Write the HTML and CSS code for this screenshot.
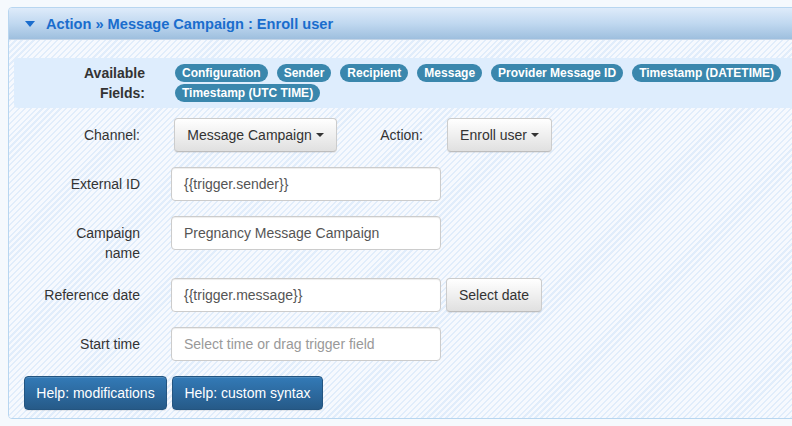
FILE: index.html
```html
<!DOCTYPE html>
<html>
<head>
<meta charset="utf-8">
<link rel="stylesheet" href="styles.css">
</head>
<body>
<div class="panel">
  <div class="panel-head">
    <span class="head-caret"></span>
    <span class="head-title">Action » Message Campaign : Enroll user</span>
  </div>
  <div class="panel-body">
    <div class="fields-box">
      <div class="fields-label">Available<br>Fields:</div>
      <div class="badges">
        <span class="badge">Configuration</span>
        <span class="badge">Sender</span>
        <span class="badge">Recipient</span>
        <span class="badge">Message</span>
        <span class="badge">Provider Message ID</span>
        <span class="badge">Timestamp (DATETIME)</span>
        <span class="badge">Timestamp (UTC TIME)</span>
      </div>
    </div>

    <div class="row row-first">
      <div class="label">Channel:</div>
      <div class="controls">
        <button class="btn btn-channel">Message Campaign <span class="caret"></span></button>
        <div class="label-inline">Action:</div>
        <button class="btn btn-action">Enroll user <span class="caret"></span></button>
      </div>
    </div>

    <div class="row">
      <div class="label">External ID</div>
      <div class="controls">
        <div class="input">{{trigger.sender}}</div>
      </div>
    </div>

    <div class="row">
      <div class="label">Campaign<br>name</div>
      <div class="controls">
        <div class="input">Pregnancy Message Campaign</div>
      </div>
    </div>

    <div class="row">
      <div class="label">Reference date</div>
      <div class="controls">
        <div class="input">{{trigger.message}}</div>
        <button class="btn btn-date">Select date</button>
      </div>
    </div>

    <div class="row">
      <div class="label">Start time</div>
      <div class="controls">
        <div class="input placeholder">Select time or drag trigger field</div>
      </div>
    </div>

    <div class="help-row">
      <button class="btn-primary btn-help1">Help: modifications</button>
      <button class="btn-primary btn-help2">Help: custom syntax</button>
    </div>
  </div>
</div>
</body>
</html>
```

FILE: styles.css
```css
* { box-sizing: border-box; }

html, body {
  margin: 0;
  padding: 0;
}

body {
  background: #f5f9fd;
  font-family: "Liberation Sans", Arial, sans-serif;
  font-size: 14px;
  color: #333;
  overflow: hidden;
  width: 792px;
  height: 426px;
  padding-top: 7px;
}

.panel {
  margin-left: 8px;
  width: 830px;
  border: 1px solid #b8d6f0;
  border-radius: 4px;
  overflow: hidden;
}

.panel-head {
  height: 33px;
  border-bottom: 1px solid #c3d4e6;
  background: linear-gradient(to bottom, #deebfa 0%, #c0d8f0 50%, #9ebfde 100%);
  display: flex;
  align-items: center;
  padding-left: 16px;
  border-top: 1px solid #c4d6ea;
  margin-top: -1px;
}

.head-caret {
  width: 0;
  height: 0;
  border-left: 5.5px solid transparent;
  border-right: 5.5px solid transparent;
  border-top: 6px solid #1a6dcd;
  margin-top: 1px;
}

.head-title {
  margin-left: 11px;
  font-weight: bold;
  font-size: 14.6px;
  color: #1a6dcd;
}

.panel-body {
  padding: 18px 0 8px 5px;
  background: repeating-linear-gradient(135deg, #e1edfb 0, #e1edfb 1.6px, #f6f9fe 1.6px, #f6f9fe 4.2px);
}

.fields-box {
  background: #deedfd;
  border-radius: 4px;
  padding: 5px 0 5px 0;
  display: flex;
}

.fields-label {
  width: 131px;
  text-align: right;
  font-weight: bold;
  font-size: 14px;
  line-height: 20px;
  color: #333;
}

.badges {
  margin-left: 30px;
  padding-top: 1px;
  width: 640px;
  display: flex;
  flex-wrap: wrap;
  column-gap: 9px;
  row-gap: 2px;
  align-content: flex-start;
}

.badge {
  display: inline-block;
  height: 18px;
  line-height: 18px;
  padding: 0 7px;
  border-radius: 9px;
  background: #3a87ad;
  color: #fff;
  font-weight: bold;
  font-size: 12px;
  white-space: nowrap;
}

.row {
  display: flex;
  margin-top: 15px;
}

.row-first {
  margin-top: 10px;
}

.label {
  width: 126px;
  text-align: right;
  padding-top: 7px;
  line-height: 20px;
  color: #333;
}

.controls {
  margin-left: 31px;
  display: flex;
  align-items: flex-start;
}

.label-inline {
  width: 86px;
  text-align: right;
  line-height: 20px;
  padding-top: 7px;
  color: #333;
}

.btn {
  height: 34px;
  border: 1px solid #ccc;
  border-bottom-color: #bdbdbd;
  border-radius: 4px;
  background: linear-gradient(to bottom, #ffffff 0%, #e0e0e0 100%);
  box-shadow: inset 0 1px 0 rgba(255,255,255,.15), 0 1px 1px rgba(0,0,0,.075);
  font-family: "Liberation Sans", Arial, sans-serif;
  font-size: 14px;
  color: #333;
  padding: 0;
  text-align: center;
  white-space: nowrap;
}

.btn-channel {
  width: 163px;
  margin-left: 3px;
}

.btn-action {
  width: 105px;
  margin-left: 24px;
}

.btn-date {
  width: 96px;
  margin-left: 5px;
}

.caret {
  display: inline-block;
  width: 0;
  height: 0;
  border-left: 4px solid transparent;
  border-right: 4px solid transparent;
  border-top: 4px solid #333;
  vertical-align: middle;
  margin-left: 0;
  margin-top: -2px;
}

.input {
  width: 270px;
  height: 34px;
  background: #fff;
  border: 1px solid #ccc;
  border-radius: 4px;
  padding: 0 12px;
  line-height: 32px;
  color: #555;
  font-size: 14px;
  box-shadow: inset 0 1px 1px rgba(0,0,0,.075);
}

.input.placeholder {
  color: #999;
}

.help-row {
  display: flex;
  gap: 5px;
  margin-top: 15px;
  margin-left: 10px;
}

.btn-primary {
  height: 34px;
  border: 1px solid #245580;
  border-radius: 4px;
  background: linear-gradient(to bottom, #337ab7 0%, #265a88 100%);
  color: #fff;
  font-family: "Liberation Sans", Arial, sans-serif;
  font-size: 14px;
  padding: 0;
  text-align: center;
  white-space: nowrap;
  box-shadow: inset 0 1px 0 rgba(255,255,255,.15), 0 1px 1px rgba(0,0,0,.075);
}

.btn-help1 { width: 143px; }
.btn-help2 { width: 151px; }
```
